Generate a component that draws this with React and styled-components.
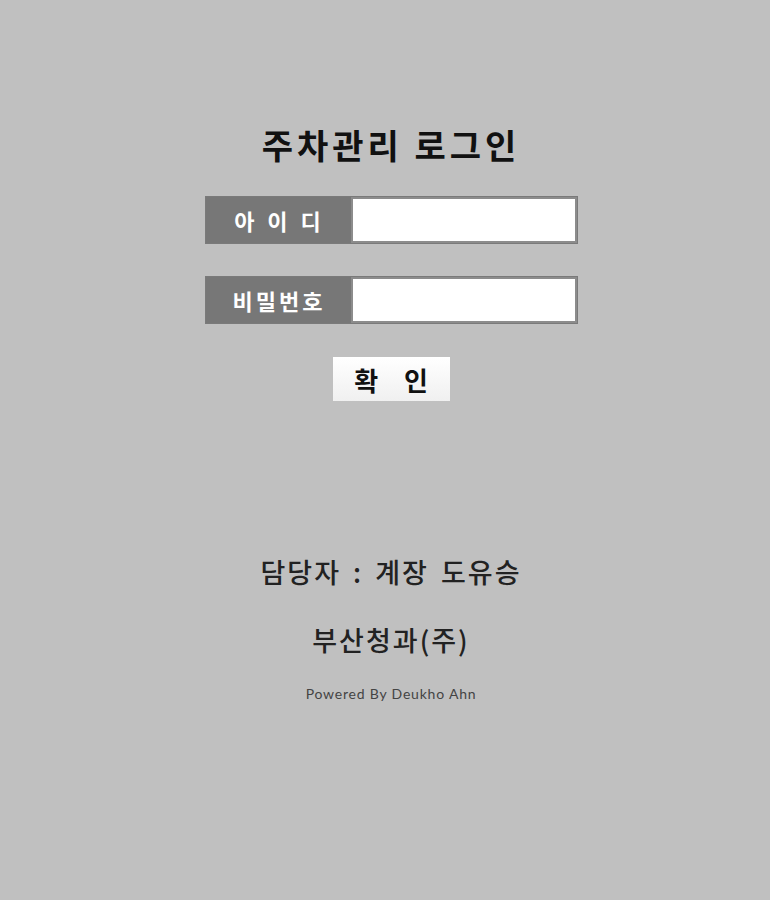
import React from "react";
import styled, { createGlobalStyle } from "styled-components";

const GlobalStyle = createGlobalStyle`
  body {
    margin: 0;
    background-color: #c0c0c0;
    font-family: "Noto Sans CJK KR", "Noto Sans", sans-serif;
  }
`;

const Page = styled.div`
  width: 770px;
  height: 900px;
  box-sizing: border-box;
  padding-top: 125px;
  padding-left: 12px;
  display: flex;
  flex-direction: column;
  align-items: center;
`;

const Title = styled.h1`
  margin: 0;
  font-size: 34px;
  line-height: 40px;
  font-weight: 700;
  letter-spacing: 4px;
  color: #111;
`;

const Form = styled.form`
  margin-top: 31px;
  display: flex;
  flex-direction: column;
  align-items: center;
  gap: 32px;
`;

const Row = styled.div`
  display: flex;
  width: 373px;
  height: 48px;
  box-sizing: border-box;
  border: 1px solid #7a7a7a;
`;

const Label = styled.label`
  width: 143px;
  flex-shrink: 0;
  background-color: #777777;
  color: #fff;
  font-size: 22px;
  font-weight: 700;
  display: flex;
  align-items: center;
  justify-content: center;
  padding-left: 2px;
  letter-spacing: ${(p) => (p.$spaced ? "3px" : "3px")};
  word-spacing: ${(p) => (p.$spaced ? "2px" : "0")};
`;

const Input = styled.input`
  flex: 1;
  min-width: 0;
  border: 2px solid #8c8c8c;
  background: #fff;
  outline: none;
  font-size: 18px;
  padding: 0 8px;
`;

const Button = styled.button`
  margin-top: 1px;
  width: 117px;
  height: 44px;
  border: none;
  background: linear-gradient(#ffffff, #f0f0f0);
  font-family: "Noto Sans CJK KR", sans-serif;
  font-size: 26px;
  font-weight: 700;
  color: #111;
  cursor: pointer;
  word-spacing: 20px;
`;

const Contact = styled.p`
  margin: ${(p) => p.$top}px 0 0;
  font-size: 27px;
  line-height: 36px;
  font-weight: 500;
  letter-spacing: 2px;
  word-spacing: 4px;
  color: #222;
`;

const Powered = styled.p`
  margin: 27px 0 0;
  font-family: "Lato", "Noto Sans", sans-serif;
  font-size: 14px;
  line-height: 18px;
  letter-spacing: 0.8px;
  color: #444;
`;

const App = () => {
  const handleSubmit = (e) => {
    e.preventDefault();
  };

  return (
    <Page>
      <GlobalStyle />
      <Title>주차관리 로그인</Title>
      <Form onSubmit={handleSubmit}>
        <Row>
          <Label $spaced>아 이 디</Label>
          <Input type="text" />
        </Row>
        <Row>
          <Label>비밀번호</Label>
          <Input type="password" />
        </Row>
        <Button type="submit">확 인</Button>
      </Form>
      <Contact $top={153}>담당자 : 계장 도유승</Contact>
      <Contact $top={32}>부산청과(주)</Contact>
      <Powered>Powered By Deukho Ahn</Powered>
    </Page>
  );
};

export default App;
